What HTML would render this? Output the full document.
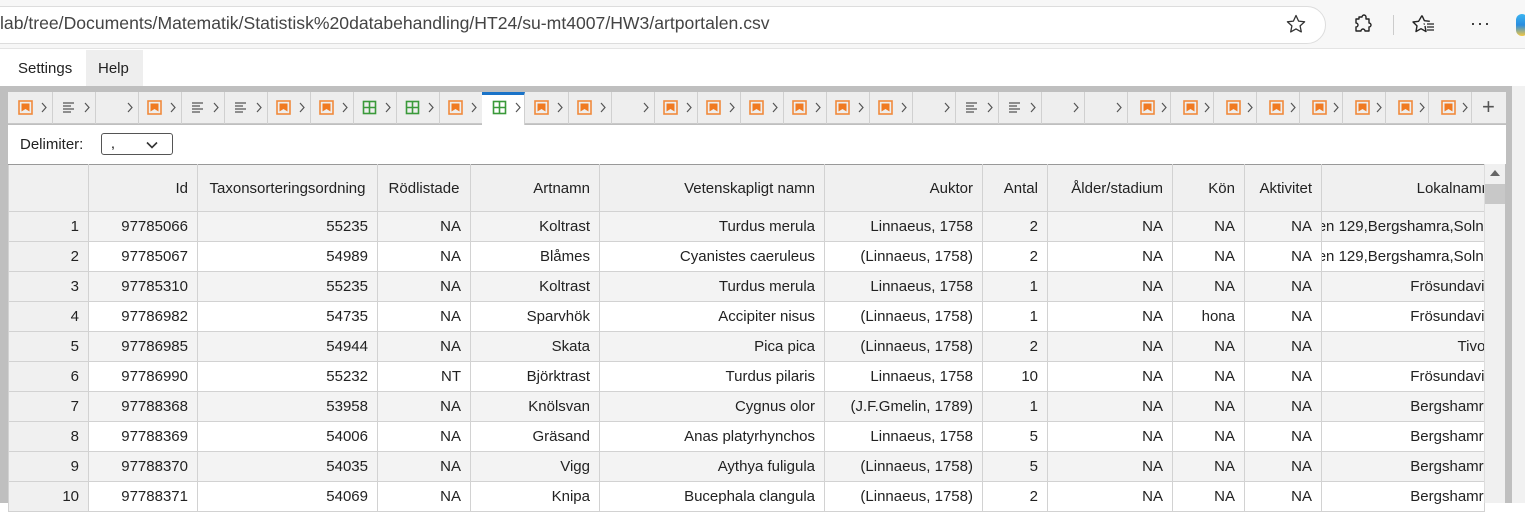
<!DOCTYPE html>
<html><head><meta charset="utf-8"><style>
*{box-sizing:border-box;margin:0;padding:0}
body{width:1525px;height:503px;overflow:hidden;background:#fff;font-family:"Liberation Sans",Arial,sans-serif;position:relative}
.top{position:absolute;left:0;top:0;width:1525px;height:49px;background:#f7f7f7;border-bottom:1px solid #e4e4e4}
.url{position:absolute;left:-20px;top:6px;width:1346px;height:38px;background:#fff;border:1px solid #ddd;border-radius:19px}
.urlt{position:absolute;left:0;top:13px;font-size:17.6px;color:#444;white-space:nowrap}
.menu{position:absolute;top:50px;left:0;width:1525px;height:36px;background:#fff}
.mi{position:absolute;top:0;height:36px;line-height:37px;font-size:15px;color:#222}
.frame{position:absolute;left:0;top:86px;width:1512px;height:417px;background:#bfbfbf}
.rside{position:absolute;left:1512px;top:86px;width:13px;height:417px;background:#f1f1f1}
.tabbar{position:absolute;left:8px;top:92px;width:1498px;height:32px;background:#eeeeee;border-bottom:1px solid #c8c8c8}
.tab{position:absolute;top:92px;width:43px;height:32px;border-right:1px solid #d0d0d0}
.tab.act{background:#fff;border-top:3px solid #1a73c8;height:33px}
.ic{position:absolute;top:100px;width:15px;height:15px}
.ch{position:absolute;top:102px;width:6px;height:11px}
.delim{position:absolute;left:8px;top:125px;width:1498px;height:39px;background:#fff}
table{position:absolute;left:8px;top:164px;border-collapse:collapse;table-layout:fixed;width:1476px;font-size:15px;color:#222;background:#fff}
td,th{border:1px solid #d2d2d2;text-align:right;padding:0 9px 0 0;white-space:nowrap;overflow:hidden;font-weight:normal;background:#fff}
th{height:47px;background:#f0f0f0;border-top:1px solid #999}
td{height:30px}
tr.o td{background:#f3f3f3}
td.rn{background:#f0f0f0!important}
td.ln{padding:0}
td.ln div{position:relative;height:29px;overflow:hidden}
td.ln span{position:absolute;right:-8px;top:6px}
.sb{position:absolute;left:1484px;top:164px;width:21px;height:339px;background:#f0f0f0;border-left:1px solid #ddd}
</style></head><body>
<div class="top">
<div class="url"></div>
<div class="urlt">lab/tree/Documents/Matematik/Statistisk%20databehandling/HT24/su-mt4007/HW3/artportalen.csv</div>
<svg style="position:absolute;left:1285px;top:13px" width="22" height="22" viewBox="0 0 22 22"><path d="M11 2.5l2.6 5.6 6 .7-4.5 4.1 1.2 6-5.3-3-5.3 3 1.2-6-4.5-4.1 6-.7z" fill="none" stroke="#333" stroke-width="1.3" stroke-linejoin="round"/></svg>
<svg style="position:absolute;left:1351px;top:13px" width="22" height="22" viewBox="0 0 22 22"><path d="M8 4h3a2 2 0 014 0v2h3v4a2 2 0 010 4v4h-4a2 2 0 00-4 0H5v-4a2 2 0 000-4V6h3z" fill="none" stroke="#222" stroke-width="1.4" stroke-linejoin="round"/></svg>
<div style="position:absolute;left:1393px;top:15px;width:1px;height:20px;background:#ccc"></div>
<svg style="position:absolute;left:1412px;top:13px" width="24" height="22" viewBox="0 0 24 22"><path d="M12 11.5l.5-1M10 2.5l2.4 5.2 5.4.6M13 13l1 5.5-5-2.8-5 2.8 1-5.6-4-3.9 5.6-.7L10 2.5" fill="none" stroke="#222" stroke-width="1.4" stroke-linejoin="round"/><path d="M15 11h7M15 14h7M15 17h7" stroke="#222" stroke-width="1.3"/></svg>
<div style="position:absolute;left:1470px;top:13px;font-size:18px;color:#222;letter-spacing:1px">···</div>
<div style="position:absolute;left:1516px;top:14px;width:12px;height:22px;border-radius:8px;background:linear-gradient(#3bb4f0,#2a8de0 50%,#f5c842)"></div>
</div>
<div class="menu">
<div class="mi" style="left:18px">Settings</div>
<div class="mi" style="left:86px;width:57px;background:#eeeeee;padding-left:12px">Help</div>
</div>
<div class="frame"></div><div class="rside"></div>
<div class="tabbar"></div>
<svg width="0" height="0" style="position:absolute"><defs>
<symbol id="im" viewBox="0 0 15 15"><rect x="1" y="1" width="13" height="13" fill="none" stroke="#f08a3c" stroke-width="1.6"/><path d="M3.5 3.5h8v8l-4-2.5-4 2.5z" fill="#f07a22"/></symbol>
<symbol id="tx" viewBox="0 0 15 15"><path d="M2 3h11M2 6h8M2 9h11M2 12h8" stroke="#555" stroke-width="1.3"/></symbol>
<symbol id="gr" viewBox="0 0 15 15"><rect x="1.5" y="1.5" width="12" height="12" fill="none" stroke="#3a9a3a" stroke-width="1.6"/><path d="M7.5 1.5v12M1.5 7.5h12" stroke="#3a9a3a" stroke-width="1.6"/></symbol>
<symbol id="cv" viewBox="0 0 6 11"><path d="M1 1l4 4.5L1 10" fill="none" stroke="#555" stroke-width="1.2"/></symbol>
</defs></svg>
<div class="tab" style="left:10px"></div><svg class="ic" style="left:18px"><use href="#im"/></svg><svg class="ch" style="left:41px"><use href="#cv"/></svg>
<div class="tab" style="left:53px"></div><svg class="ic" style="left:61px"><use href="#tx"/></svg><svg class="ch" style="left:84px"><use href="#cv"/></svg>
<div class="tab" style="left:96px"></div><svg class="ch" style="left:127px"><use href="#cv"/></svg>
<div class="tab" style="left:139px"></div><svg class="ic" style="left:147px"><use href="#im"/></svg><svg class="ch" style="left:170px"><use href="#cv"/></svg>
<div class="tab" style="left:182px"></div><svg class="ic" style="left:190px"><use href="#tx"/></svg><svg class="ch" style="left:213px"><use href="#cv"/></svg>
<div class="tab" style="left:225px"></div><svg class="ic" style="left:233px"><use href="#tx"/></svg><svg class="ch" style="left:256px"><use href="#cv"/></svg>
<div class="tab" style="left:268px"></div><svg class="ic" style="left:276px"><use href="#im"/></svg><svg class="ch" style="left:299px"><use href="#cv"/></svg>
<div class="tab" style="left:311px"></div><svg class="ic" style="left:319px"><use href="#im"/></svg><svg class="ch" style="left:342px"><use href="#cv"/></svg>
<div class="tab" style="left:354px"></div><svg class="ic" style="left:362px"><use href="#gr"/></svg><svg class="ch" style="left:385px"><use href="#cv"/></svg>
<div class="tab" style="left:397px"></div><svg class="ic" style="left:405px"><use href="#gr"/></svg><svg class="ch" style="left:428px"><use href="#cv"/></svg>
<div class="tab" style="left:440px"></div><svg class="ic" style="left:448px"><use href="#im"/></svg><svg class="ch" style="left:471px"><use href="#cv"/></svg>
<div class="tab act" style="left:482px"></div><svg class="ic" style="left:492px"><use href="#gr"/></svg><svg class="ch" style="left:515px"><use href="#cv"/></svg>
<div class="tab" style="left:526px"></div><svg class="ic" style="left:534px"><use href="#im"/></svg><svg class="ch" style="left:557px"><use href="#cv"/></svg>
<div class="tab" style="left:569px"></div><svg class="ic" style="left:577px"><use href="#im"/></svg><svg class="ch" style="left:600px"><use href="#cv"/></svg>
<div class="tab" style="left:612px"></div><svg class="ch" style="left:643px"><use href="#cv"/></svg>
<div class="tab" style="left:655px"></div><svg class="ic" style="left:663px"><use href="#im"/></svg><svg class="ch" style="left:686px"><use href="#cv"/></svg>
<div class="tab" style="left:698px"></div><svg class="ic" style="left:706px"><use href="#im"/></svg><svg class="ch" style="left:729px"><use href="#cv"/></svg>
<div class="tab" style="left:741px"></div><svg class="ic" style="left:749px"><use href="#im"/></svg><svg class="ch" style="left:772px"><use href="#cv"/></svg>
<div class="tab" style="left:784px"></div><svg class="ic" style="left:792px"><use href="#im"/></svg><svg class="ch" style="left:815px"><use href="#cv"/></svg>
<div class="tab" style="left:827px"></div><svg class="ic" style="left:835px"><use href="#im"/></svg><svg class="ch" style="left:858px"><use href="#cv"/></svg>
<div class="tab" style="left:870px"></div><svg class="ic" style="left:878px"><use href="#im"/></svg><svg class="ch" style="left:901px"><use href="#cv"/></svg>
<div class="tab" style="left:913px"></div><svg class="ch" style="left:944px"><use href="#cv"/></svg>
<div class="tab" style="left:956px"></div><svg class="ic" style="left:964px"><use href="#tx"/></svg><svg class="ch" style="left:987px"><use href="#cv"/></svg>
<div class="tab" style="left:999px"></div><svg class="ic" style="left:1007px"><use href="#tx"/></svg><svg class="ch" style="left:1030px"><use href="#cv"/></svg>
<div class="tab" style="left:1042px"></div><svg class="ch" style="left:1073px"><use href="#cv"/></svg>
<div class="tab" style="left:1085px"></div><svg class="ch" style="left:1116px"><use href="#cv"/></svg>
<div class="tab" style="left:1128px"></div><svg class="ic" style="left:1140px"><use href="#im"/></svg><svg class="ch" style="left:1161px"><use href="#cv"/></svg>
<div class="tab" style="left:1171px"></div><svg class="ic" style="left:1183px"><use href="#im"/></svg><svg class="ch" style="left:1204px"><use href="#cv"/></svg>
<div class="tab" style="left:1214px"></div><svg class="ic" style="left:1226px"><use href="#im"/></svg><svg class="ch" style="left:1247px"><use href="#cv"/></svg>
<div class="tab" style="left:1257px"></div><svg class="ic" style="left:1269px"><use href="#im"/></svg><svg class="ch" style="left:1290px"><use href="#cv"/></svg>
<div class="tab" style="left:1300px"></div><svg class="ic" style="left:1312px"><use href="#im"/></svg><svg class="ch" style="left:1333px"><use href="#cv"/></svg>
<div class="tab" style="left:1343px"></div><svg class="ic" style="left:1355px"><use href="#im"/></svg><svg class="ch" style="left:1376px"><use href="#cv"/></svg>
<div class="tab" style="left:1386px"></div><svg class="ic" style="left:1398px"><use href="#im"/></svg><svg class="ch" style="left:1419px"><use href="#cv"/></svg>
<div class="tab" style="left:1429px"></div><svg class="ic" style="left:1441px"><use href="#im"/></svg><svg class="ch" style="left:1462px"><use href="#cv"/></svg>
<div style="position:absolute;left:1482px;top:94px;font-size:22px;color:#555">+</div>
<div class="delim">
<div style="position:absolute;left:12px;top:11px;font-size:15px;color:#222">Delimiter:</div>
<div style="position:absolute;left:93px;top:8px;width:72px;height:22px;border:1px solid #555;border-radius:3px;background:#fff">
<span style="position:absolute;left:9px;top:1px;font-size:14px">,</span>
<svg style="position:absolute;left:44px;top:7px" width="12" height="8" viewBox="0 0 12 8"><path d="M1 1.5l5 5 5-5" fill="none" stroke="#333" stroke-width="1.6"/></svg>
</div></div>
<table>
<colgroup><col style="width:80px"><col style="width:109px"><col style="width:180px"><col style="width:93px"><col style="width:129px"><col style="width:225px"><col style="width:158px"><col style="width:65px"><col style="width:125px"><col style="width:72px"><col style="width:77px"><col style="width:163px"></colgroup>
<tr><th></th><th>Id</th><th style="text-align:center;padding:0">Taxonsorteringsordning</th><th style="text-align:center;padding:0">Rödlistade</th><th>Artnamn</th><th>Vetenskapligt namn</th><th>Auktor</th><th>Antal</th><th>Ålder/stadium</th><th>Kön</th><th>Aktivitet</th><th style="padding-right:0"><span style="margin-right:-6px">Lokalnamn</span></th></tr>
<tr class="o"><td class="rn">1</td><td>97785066</td><td>55235</td><td>NA</td><td>Koltrast</td><td>Turdus merula</td><td>Linnaeus, 1758</td><td>2</td><td>NA</td><td>NA</td><td>NA</td><td class="ln"><div><span>Västra vägen 129,Bergshamra,Solna</span></div></td></tr>
<tr><td class="rn">2</td><td>97785067</td><td>54989</td><td>NA</td><td>Blåmes</td><td>Cyanistes caeruleus</td><td>(Linnaeus, 1758)</td><td>2</td><td>NA</td><td>NA</td><td>NA</td><td class="ln"><div><span>Västra vägen 129,Bergshamra,Solna</span></div></td></tr>
<tr class="o"><td class="rn">3</td><td>97785310</td><td>55235</td><td>NA</td><td>Koltrast</td><td>Turdus merula</td><td>Linnaeus, 1758</td><td>1</td><td>NA</td><td>NA</td><td>NA</td><td class="ln"><div><span>Frösundavik</span></div></td></tr>
<tr><td class="rn">4</td><td>97786982</td><td>54735</td><td>NA</td><td>Sparvhök</td><td>Accipiter nisus</td><td>(Linnaeus, 1758)</td><td>1</td><td>NA</td><td>hona</td><td>NA</td><td class="ln"><div><span>Frösundavik</span></div></td></tr>
<tr class="o"><td class="rn">5</td><td>97786985</td><td>54944</td><td>NA</td><td>Skata</td><td>Pica pica</td><td>(Linnaeus, 1758)</td><td>2</td><td>NA</td><td>NA</td><td>NA</td><td class="ln"><div><span>Tivoli</span></div></td></tr>
<tr><td class="rn">6</td><td>97786990</td><td>55232</td><td>NT</td><td>Björktrast</td><td>Turdus pilaris</td><td>Linnaeus, 1758</td><td>10</td><td>NA</td><td>NA</td><td>NA</td><td class="ln"><div><span>Frösundavik</span></div></td></tr>
<tr class="o"><td class="rn">7</td><td>97788368</td><td>53958</td><td>NA</td><td>Knölsvan</td><td>Cygnus olor</td><td>(J.F.Gmelin, 1789)</td><td>1</td><td>NA</td><td>NA</td><td>NA</td><td class="ln"><div><span>Bergshamra</span></div></td></tr>
<tr><td class="rn">8</td><td>97788369</td><td>54006</td><td>NA</td><td>Gräsand</td><td>Anas platyrhynchos</td><td>Linnaeus, 1758</td><td>5</td><td>NA</td><td>NA</td><td>NA</td><td class="ln"><div><span>Bergshamra</span></div></td></tr>
<tr class="o"><td class="rn">9</td><td>97788370</td><td>54035</td><td>NA</td><td>Vigg</td><td>Aythya fuligula</td><td>(Linnaeus, 1758)</td><td>5</td><td>NA</td><td>NA</td><td>NA</td><td class="ln"><div><span>Bergshamra</span></div></td></tr>
<tr><td class="rn">10</td><td>97788371</td><td>54069</td><td>NA</td><td>Knipa</td><td>Bucephala clangula</td><td>(Linnaeus, 1758)</td><td>2</td><td>NA</td><td>NA</td><td>NA</td><td class="ln"><div><span>Bergshamra</span></div></td></tr>
</table>
<div class="sb"><div style="position:absolute;left:0;top:20px;width:20px;height:20px;background:#c8c8c8"></div>
<svg style="position:absolute;left:5px;top:6px" width="10" height="6" viewBox="0 0 10 6"><path d="M0 6L5 0l5 6z" fill="#666"/></svg></div>
</body></html>
